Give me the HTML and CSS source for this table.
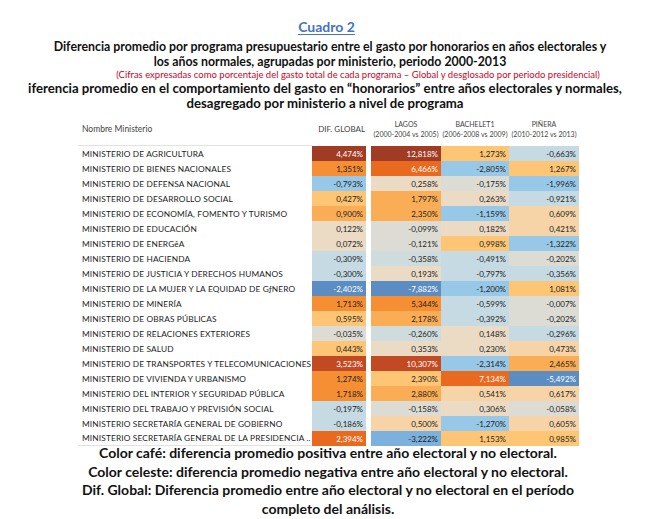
FILE: index.html
```html
<!DOCTYPE html>
<html lang="es">
<head>
<meta charset="utf-8">
<title>Cuadro 2</title>
<link rel="stylesheet" href="styles.css">
</head>
<body>
<div class="page">
  <h1 class="title"><span class="cuadro">Cuadro 2</span></h1>
  <p class="sub">Diferencia promedio por programa presupuestario entre el gasto por honorarios en años electorales y<br>los años normales, agrupadas por ministerio, periodo 2000-2013</p>
  <p class="note">(Cifras expresadas como porcentaje del gasto total de cada programa – Global y desglosado por periodo presidencial)</p>
  <p class="sub2">iferencia promedio en el comportamiento del gasto en “honorarios” entre años electorales y normales,<br>desagregado por ministerio a nivel de programa</p>

  <div class="table">
    <div class="row head">
      <div class="n hn">Nombre Ministerio</div>
      <div class="h hg">DIF. GLOBAL</div>
      <div class="h hl"><span>LAGOS</span><span>(2000-2004 vs 2005)</span></div>
      <div class="h"><span>BACHELET1</span><span>(2006-2008 vs 2009)</span></div>
      <div class="h"><span>PIÑERA</span><span>(2010-2012 vs 2013)</span></div>
    </div>

    <div class="row"><div class="n">MINISTERIO DE AGRICULTURA</div><div class="v d1">4,474%</div><div class="v l d1">12,818%</div><div class="v o4">1,273%</div><div class="v b1">-0,663%</div></div>
    <div class="row"><div class="n">MINISTERIO DE BIENES NACIONALES</div><div class="v o2">1,351%</div><div class="v l o1">6,466%</div><div class="v b2">-2,805%</div><div class="v o4">1,267%</div></div>
    <div class="row"><div class="n">MINISTERIO DE DEFENSA NACIONAL</div><div class="v b2">-0,793%</div><div class="v l be">0,258%</div><div class="v g">-0,175%</div><div class="v b2">-1,996%</div></div>
    <div class="row"><div class="n">MINISTERIO DE DESARROLLO SOCIAL</div><div class="v o4">0,427%</div><div class="v l o3">1,797%</div><div class="v be">0,263%</div><div class="v b1">-0,921%</div></div>
    <div class="row"><div class="n">MINISTERIO DE ECONOMÍA, FOMENTO Y TURISMO</div><div class="v o3">0,900%</div><div class="v l o3">2,350%</div><div class="v b2">-1,159%</div><div class="v p">0,609%</div></div>
    <div class="row"><div class="n">MINISTERIO DE EDUCACIÓN</div><div class="v be">0,122%</div><div class="v l g">-0,099%</div><div class="v be">0,182%</div><div class="v p">0,421%</div></div>
    <div class="row"><div class="n">MINISTERIO DE ENERGêA</div><div class="v be">0,072%</div><div class="v l g">-0,121%</div><div class="v o4">0,998%</div><div class="v b2">-1,322%</div></div>
    <div class="row"><div class="n">MINISTERIO DE HACIENDA</div><div class="v b1">-0,309%</div><div class="v l b1g">-0,358%</div><div class="v b1">-0,491%</div><div class="v g">-0,202%</div></div>
    <div class="row"><div class="n">MINISTERIO DE JUSTICIA Y DERECHOS HUMANOS</div><div class="v b1">-0,300%</div><div class="v l be">0,193%</div><div class="v b1">-0,797%</div><div class="v b1">-0,356%</div></div>
    <div class="row"><div class="n">MINISTERIO DE LA MUJER Y LA EQUIDAD DE GƒNERO</div><div class="v b3">-2,402%</div><div class="v l b3">-7,882%</div><div class="v b2">-1,200%</div><div class="v o4">1,081%</div></div>
    <div class="row"><div class="n">MINISTERIO DE MINERÍA</div><div class="v o2">1,713%</div><div class="v l o2">5,344%</div><div class="v b1">-0,599%</div><div class="v g">-0,007%</div></div>
    <div class="row"><div class="n">MINISTERIO DE OBRAS PÚBLICAS</div><div class="v o4">0,595%</div><div class="v l o3">2,178%</div><div class="v b1">-0,392%</div><div class="v g">-0,202%</div></div>
    <div class="row"><div class="n">MINISTERIO DE RELACIONES EXTERIORES</div><div class="v g">-0,035%</div><div class="v l b1g">-0,260%</div><div class="v be">0,148%</div><div class="v b1">-0,296%</div></div>
    <div class="row"><div class="n">MINISTERIO DE SALUD</div><div class="v o4">0,443%</div><div class="v l be">0,353%</div><div class="v be">0,230%</div><div class="v p">0,473%</div></div>
    <div class="row"><div class="n">MINISTERIO DE TRANSPORTES Y TELECOMUNICACIONES</div><div class="v d2">3,523%</div><div class="v l d2">10,307%</div><div class="v b2">-2,314%</div><div class="v o3">2,465%</div></div>
    <div class="row"><div class="n">MINISTERIO DE VIVIENDA Y URBANISMO</div><div class="v o2">1,274%</div><div class="v l o4">2,390%</div><div class="v o1">7,134%</div><div class="v b3">-5,492%</div></div>
    <div class="row"><div class="n">MINISTERIO DEL INTERIOR Y SEGURIDAD PÚBLICA</div><div class="v o2">1,718%</div><div class="v l o3">2,880%</div><div class="v p">0,541%</div><div class="v p">0,617%</div></div>
    <div class="row"><div class="n">MINISTERIO DEL TRABAJO Y PREVISIÓN SOCIAL</div><div class="v b1">-0,197%</div><div class="v l g">-0,158%</div><div class="v be">0,306%</div><div class="v g">-0,058%</div></div>
    <div class="row"><div class="n">MINISTERIO SECRETARÍA GENERAL DE GOBIERNO</div><div class="v b1">-0,186%</div><div class="v l p">0,500%</div><div class="v b2">-1,270%</div><div class="v p">0,605%</div></div>
    <div class="row last"><div class="n">MINISTERIO SECRETARÍA GENERAL DE LA PRESIDENCIA ..</div><div class="v o1">2,394%</div><div class="v l b2b">-3,222%</div><div class="v o4">1,153%</div><div class="v o4">0,985%</div></div>
  </div>

  <div class="legend">
    <p>Color café: diferencia promedio positiva entre año electoral y no electoral.</p>
    <p>Color celeste: diferencia promedio negativa entre año electoral y no electoral.</p>
    <p>Dif. Global: Diferencia promedio entre año electoral y no electoral en el período<br>completo del análisis.</p>
  </div>
</div>
</body>
</html>
```

FILE: styles.css
```css
* { box-sizing: border-box; }

body {
  margin: 0;
  background: #fff;
  color: #111;
  font-family: Lato, "Open Sans", "DejaVu Sans", sans-serif;
}

.page {
  width: 660px;
  padding-top: 19px;
  text-align: center;
}

.title {
  margin: 0;
  padding-right: 7px;
  font-size: 14px;
  line-height: 16px;
  font-weight: 700;
}

.cuadro {
  color: #4472c4;
  text-decoration: underline;
  text-underline-offset: 2px;
}

.sub {
  margin: 4px 0 0;
  font-size: 12.35px;
  line-height: 15px;
  font-weight: 700;
}

.note {
  margin: 0;
  padding-left: 56px;
  font-size: 9.5px;
  line-height: 11px;
  color: #d4001c;
}

.sub2 {
  margin: 1px 0 0;
  padding-right: 10px;
  font-size: 13.2px;
  line-height: 15px;
  font-weight: 700;
}

.table {
  width: 501px;
  margin: 0 0 0 78px;
  text-align: left;
}

.row {
  display: grid;
  grid-template-columns: 234px 54px 75px 68px 70px;
  height: 15px;
}

.row.head {
  height: 35px;
}

.n {
  display: flex;
  align-items: center;
  padding-left: 4px;
  font-size: 8.3px;
  letter-spacing: 0.15px;
  color: #222;
  white-space: nowrap;
  overflow: hidden;
}

.hn {
  border-bottom: 1px solid #e2e2e2;
  padding-top: 1px;
  font-size: 8.5px;
  color: #444;
  letter-spacing: 0;
}

.row.last .n {
  border-bottom: 1px solid #e2e2e2;
}

.h {
  display: flex;
  flex-direction: column;
  justify-content: center;
  align-items: center;
  font-size: 7px;
  line-height: 10px;
  color: #444;
  white-space: nowrap;
}

.hg {
  align-items: flex-end;
  padding-right: 1px;
  font-size: 8px;
  padding-top: 1px;
}

.hl {
  margin-left: 5px;
}

.v {
  display: flex;
  align-items: center;
  justify-content: flex-end;
  padding-right: 3px;
  font-size: 8px;
  color: #222;
}

.v.l {
  margin-left: 5px;
}

.d1 { background: #a13c24; color: #fff; }
.d2 { background: #c24a22; color: #fff; }
.o1 { background: #e9691f; color: #fff; }
.o2 { background: #f68e34; }
.o3 { background: #fbad55; }
.o4 { background: #fdc574; }
.p  { background: #f6d4a8; }
.be { background: #ebdac4; }
.g  { background: #dcdcd4; }
.b1g { background: #cfdcdd; }
.b1 { background: #c5dae3; }
.b2 { background: #97c8e8; }
.b2b { background: #7cb0dd; }
.b3 { background: #5b8dc3; color: #fff; }

.legend {
  margin-top: -2px;
  padding-right: 4px;
  font-size: 14px;
  line-height: 18.5px;
  font-weight: 700;
}

.legend p {
  margin: 0;
}
```
